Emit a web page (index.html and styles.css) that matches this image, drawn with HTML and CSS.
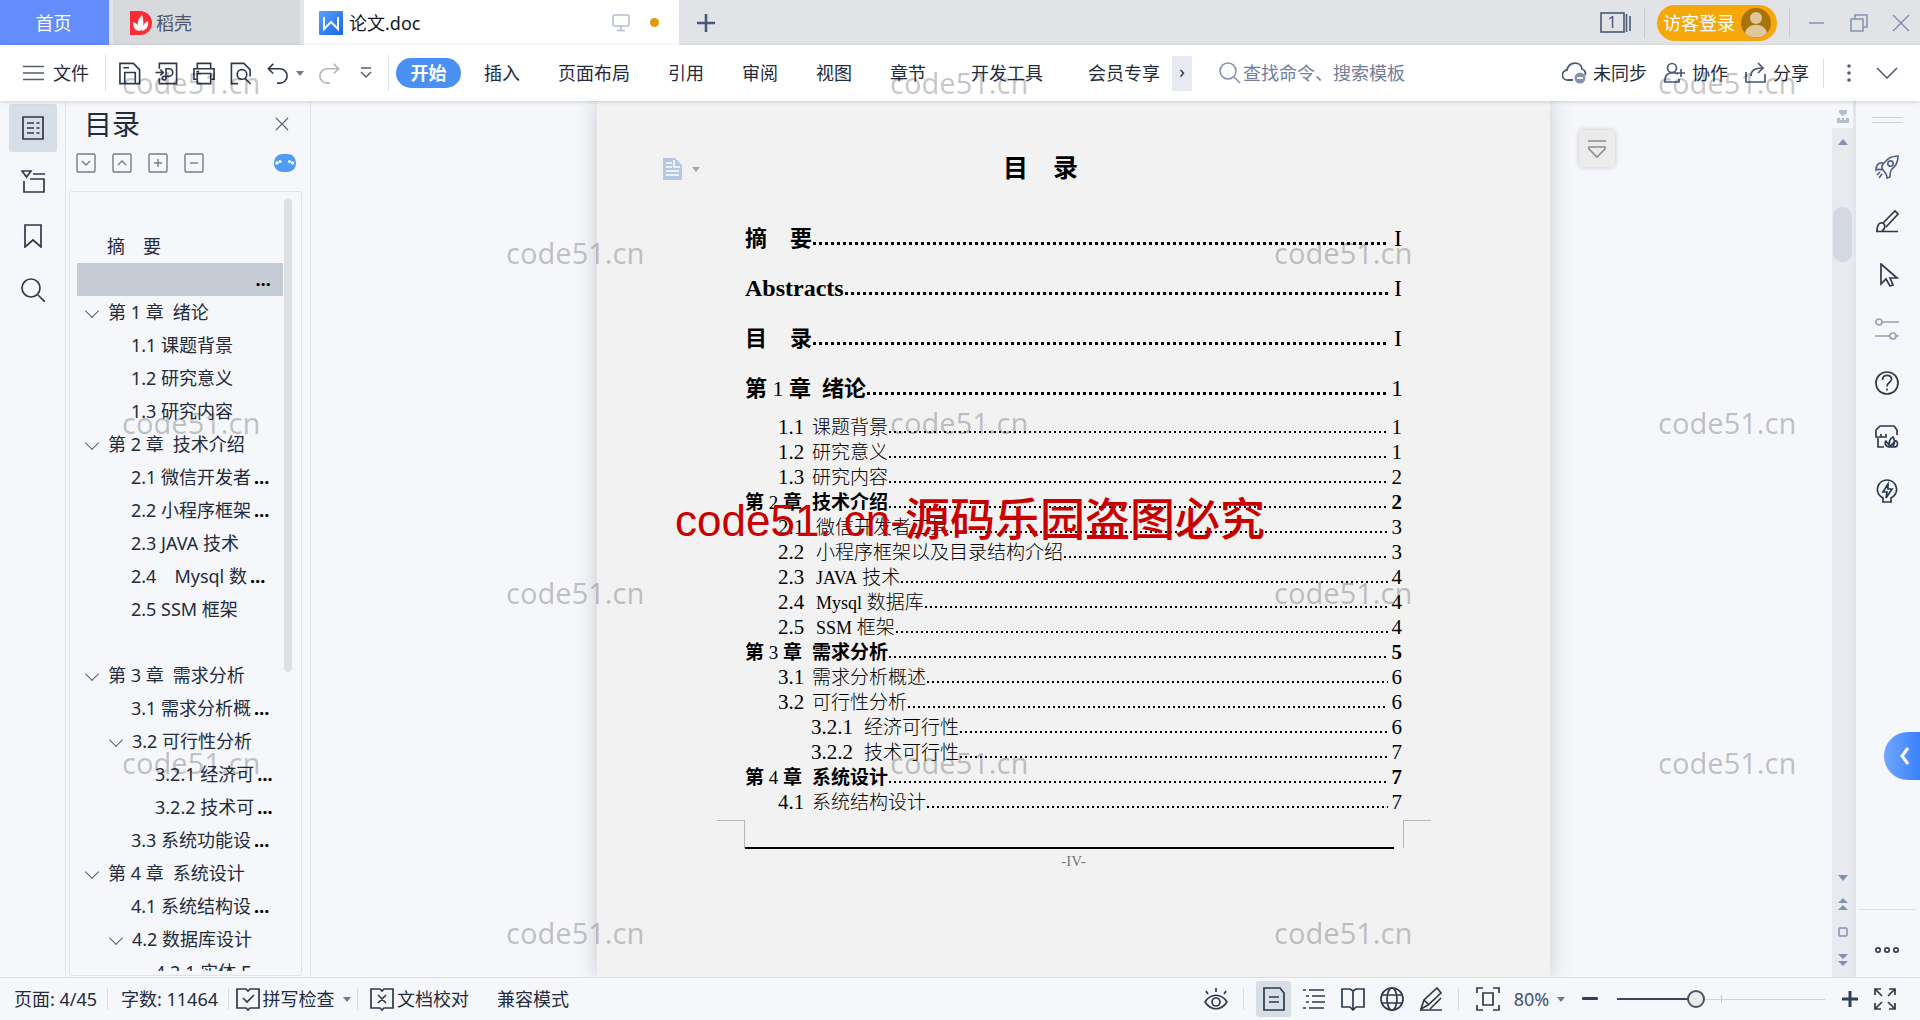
FILE: index.html
```html
<!DOCTYPE html>
<html lang="zh-CN">
<head>
<meta charset="utf-8">
<title>论文.doc</title>
<link rel="stylesheet" href="styles.css">
</head>
<body>
<div class="app">
  <header class="titlebar">
    <button class="tab tab-home">首页</button>
    <button class="tab tab-docer">
      <svg width="24" height="24" viewBox="0 0 24 24"><path d="M1 0h10a12 12 0 0 1 0 24H1z" fill="#fb2c36"/><path d="M12 20C7 15 8 9 13 4c2 6 2 11-1 16zM11 20c-5 0-7-4-7-9 4 1 6 4 7 9zM13 20c0-5 2-8 6-10 1 6-2 9-6 10z" fill="#fff"/></svg>
      稻壳</button>
    <button class="tab tab-doc">
      <svg width="24" height="24" viewBox="0 0 24 24"><defs><linearGradient id="w" x1="0" y1="0" x2="1" y2="1"><stop offset="0" stop-color="#5aa0fa"/><stop offset="1" stop-color="#1668ee"/></linearGradient></defs><rect width="24" height="24" rx="1" fill="url(#w)"/><path d="M5 6v12l7-7 7 7V6" fill="none" stroke="#fff" stroke-width="2"/></svg>
      <span class="tab-name">论文.doc</span>
      <svg width="18" height="18" viewBox="0 0 18 18" fill="none" stroke="#b4bdd2" stroke-width="1.6"><rect x="1" y="1" width="16" height="11" rx="1.5"/><path d="M9 12v4M5 16.5h8"/></svg>
      <span class="dot"></span>
    </button>
    <button class="icon-btn new-tab" aria-label="新建"><svg width="18" height="18" viewBox="0 0 18 18" stroke="#4a5876" stroke-width="2.6"><path d="M9 0v18M0 9h18"/></svg></button>
    <div class="window-tools">
      <button class="icon-btn" aria-label="窗口"><svg width="32" height="24" viewBox="0 0 32 24"><g fill="none" stroke="#4a5876" stroke-width="1.6"><rect x="1" y="2" width="23" height="19"/><path d="M26.500 3v18M30 5v15"/></g><text x="12" y="17" text-anchor="middle" class="count">1</text></svg></button>
      <span class="rule"></span>
      <button class="login">访客登录 <svg width="30" height="30" viewBox="0 0 30 30"><circle cx="15" cy="15" r="15" fill="#a87307"/><circle cx="15" cy="10" r="6" fill="#dfc79c"/><path d="M4 25c2-11 20-11 22 0-5 6-17 6-22 0z" fill="#dfc79c"/></svg></button>
      <span class="rule"></span>
      <button class="icon-btn win" aria-label="最小化"><svg width="18" height="18" viewBox="0 0 18 18" stroke="#8492b0" stroke-width="1.500"><path d="M1 9h15"/></svg></button>
      <button class="icon-btn win" aria-label="还原"><svg width="18" height="18" viewBox="0 0 18 18" fill="none" stroke="#8492b0" stroke-width="1.500"><path d="M5 5V1h12v12h-4"/><rect x="1" y="5" width="12" height="12"/></svg></button>
      <button class="icon-btn win" aria-label="关闭"><svg width="18" height="18" viewBox="0 0 18 18" stroke="#8492b0" stroke-width="1.500"><path d="M1 1l16 16M17 1L1 17"/></svg></button>
    </div>
  </header>

  <nav class="menubar">
    <button class="file-btn"><svg width="22" height="16" viewBox="0 0 22 16" stroke="#555d6e" stroke-width="1.500"><path d="M0 1.500h21M0 8h21M0 14.500h21"/></svg>文件</button>
    <span class="rule tall"></span>
    <div class="quick">
      <button class="icon-btn" aria-label="保存"><svg class="ic" viewBox="0 0 24 24"><path d="M1.500 1.500h14l6.500 6.500v14.500h-20.500zM6.500 22V11h11v11M5 6h6"/></svg></button>
      <button class="icon-btn" aria-label="输出为PDF"><svg class="ic" viewBox="0 0 24 24"><path d="M4 7V1.500h18v21H4V17M0 11h8M5 8l3 3-3 3M11 18V7h3a4 4 0 0 1 0 8h-6a2 2 0 1 0 3 2"/></svg></button>
      <button class="icon-btn" aria-label="打印"><svg class="ic" viewBox="0 0 24 24"><path d="M5 7V1.500h14V7M5 18H1.500V7h21v11H19M5 12h14v10.500H5zM4 10h3"/></svg></button>
      <button class="icon-btn" aria-label="打印预览"><svg class="ic" viewBox="0 0 24 24"><path d="M9 22.500H2v-21h13l6.500 6.500v7M16 17l6 6"/><circle cx="13" cy="13" r="5"/></svg></button>
      <button class="icon-btn undo" aria-label="撤销"><svg class="ic" viewBox="0 0 24 24"><path d="M7 2L2 7l5 5M2 7h12a7 7 0 0 1 0 15h-3"/></svg></button>
      <i class="caret"></i>
      <button class="icon-btn redo" aria-label="恢复"><svg class="ic faint" viewBox="0 0 24 24"><path d="M17 2l5 5-5 5M22 7H10a7 7 0 0 0 0 15h3"/></svg></button>
      <button class="icon-btn" aria-label="更多"><svg width="12" height="14" viewBox="0 0 12 14" fill="none" stroke="#555d6e" stroke-width="1.500"><path d="M1 2h10M1 6l5 5 5-5"/></svg></button>
    </div>
    <span class="rule tall"></span>
    <div class="ribbon">
      <button class="active">开始</button>
      <button>插入</button>
      <button>页面布局</button>
      <button>引用</button>
      <button>审阅</button>
      <button>视图</button>
      <button>章节</button>
      <button class="wide">开发工具</button>
      <button class="wide">会员专享</button>
      <button class="more" aria-label="更多选项卡">›</button>
    </div>
    <label class="search">
      <svg width="22" height="22" viewBox="0 0 22 22" fill="none" stroke="#8793b1" stroke-width="1.600"><circle cx="9" cy="9" r="8"/><path d="M15 15l6 6"/></svg>
      <input type="text" placeholder="查找命令、搜索模板" aria-label="查找命令、搜索模板">
    </label>
    <div class="share">
      <button><svg width="25" height="22" viewBox="0 0 25 22" fill="none" stroke="#4a5876" stroke-width="1.800"><path d="M11 18H6a5 5 0 0 1-1-10C7-1 19-1 20 7c3 1 4 4 3 6"/><circle cx="18" cy="16" r="5.500" fill="#8492b0" stroke="none"/><path d="M15 16h6" stroke="#fff"/></svg>未同步</button>
      <button><svg width="23" height="22" viewBox="0 0 23 22" fill="none" stroke="#4a5876" stroke-width="1.700"><circle cx="9" cy="6" r="4.500"/><path d="M15 12c-6-3-13-1-13 6v2h14v-3M18 7v8M14 11h8"/></svg>协作</button>
      <button><svg width="23" height="22" viewBox="0 0 23 22" fill="none" stroke="#4a5876" stroke-width="1.700"><path d="M2 10v10h19v-8M7 14c0-6 4-8 12-8M14 1l5 5-5 5"/></svg>分享</button>
    </div>
    <span class="rule"></span>
    <button class="icon-btn dots" aria-label="更多"><svg width="6" height="20" viewBox="0 0 6 20" fill="#555d76"><circle cx="3" cy="3" r="1.800"/><circle cx="3" cy="10" r="1.800"/><circle cx="3" cy="17" r="1.800"/></svg></button>
    <button class="icon-btn fold" aria-label="折叠功能区"><svg width="22" height="12" viewBox="0 0 22 12" fill="none" stroke="#4d566b" stroke-width="1.500"><path d="M1 1l10 10L21 1"/></svg></button>
  </nav>

  <main class="workspace">
    <aside class="rail">
      <button class="active" aria-label="目录"><svg class="ic" viewBox="0 0 24 24"><path d="M2 1h20v22H2zM6 7h7M6 12h7M6 17h7M15.500 7h3M15.500 12h3M15.500 17h3"/></svg></button>
      <button aria-label="导航"><svg class="ic" viewBox="0 0 24 24"><path d="M1 1h9L5.500 7zM12 4h12M3 11v11h20V9H9"/></svg></button>
      <button aria-label="书签"><svg class="ic" viewBox="0 0 24 24"><path d="M4 1h16v22l-8-7-8 7z"/></svg></button>
      <button aria-label="查找"><svg class="ic" viewBox="0 0 24 24"><circle cx="10" cy="10" r="9"/><path d="M17 17l7 7"/></svg></button>
    </aside>

    <section class="outline">
      <div class="outline-head"><h2>目录</h2><button class="icon-btn" aria-label="关闭"><svg width="14" height="14" viewBox="0 0 14 14" stroke="#5d6880" stroke-width="1.200"><path d="M1 1l12 12M13 1L1 13"/></svg></button></div>
      <div class="outline-tools">
        <button class="icon-btn" aria-label="展开"><svg class="sq" viewBox="0 0 20 20"><rect x="1" y="1" width="18" height="18" rx="1"/><path d="M6 8l4 4 4-4"/></svg></button>
        <button class="icon-btn" aria-label="收起"><svg class="sq" viewBox="0 0 20 20"><rect x="1" y="1" width="18" height="18" rx="1"/><path d="M6 12l4-4 4 4"/></svg></button>
        <button class="icon-btn" aria-label="增加"><svg class="sq" viewBox="0 0 20 20"><rect x="1" y="1" width="18" height="18" rx="1"/><path d="M6 10h8M10 6v8"/></svg></button>
        <button class="icon-btn" aria-label="减少"><svg class="sq" viewBox="0 0 20 20"><rect x="1" y="1" width="18" height="18" rx="1"/><path d="M6 10h8"/></svg></button>
        <button class="icon-btn assistant" aria-label="智能识别"><svg width="22" height="18" viewBox="0 0 22 18"><rect width="22" height="18" rx="8.500" fill="#4f9bf5"/><g fill="#fff"><circle cx="3" cy="9" r="1.700"/><circle cx="6" cy="7.500" r="1.500"/><circle cx="15.500" cy="7.500" r="1.500"/><circle cx="18.500" cy="9" r="1.700"/></g></svg></button>
      </div>
      <div class="tree">
        <ul>
          <li><a href="#">摘&emsp;要</a></li>
          <li class="selected"><a href="#">…</a></li>
          <li class="open"><a href="#">第 1 章&ensp;绪论</a></li>
          <li class="l2"><a href="#">1.1 课题背景</a></li>
          <li class="l2"><a href="#">1.2 研究意义</a></li>
          <li class="l2"><a href="#">1.3 研究内容</a></li>
          <li class="open"><a href="#">第 2 章&ensp;技术介绍</a></li>
          <li class="l2"><a href="#">2.1 微信开发者<b>…</b></a></li>
          <li class="l2"><a href="#">2.2 小程序框架<b>…</b></a></li>
          <li class="l2"><a href="#">2.3 JAVA 技术</a></li>
          <li class="l2"><a href="#">2.4&emsp;Mysql 数<b>…</b></a></li>
          <li class="l2"><a href="#">2.5 SSM 框架</a></li>
          <li></li>
          <li class="open"><a href="#">第 3 章&ensp;需求分析</a></li>
          <li class="l2"><a href="#">3.1 需求分析概<b>…</b></a></li>
          <li class="l2 open"><a href="#">3.2 可行性分析</a></li>
          <li class="l3"><a href="#">3.2.1 经济可<b>…</b></a></li>
          <li class="l3"><a href="#">3.2.2 技术可<b>…</b></a></li>
          <li class="l2"><a href="#">3.3 系统功能设<b>…</b></a></li>
          <li class="open"><a href="#">第 4 章&ensp;系统设计</a></li>
          <li class="l2"><a href="#">4.1 系统结构设<b>…</b></a></li>
          <li class="l2 open"><a href="#">4.2 数据库设计</a></li>
          <li class="l3"><a href="#">4.2.1 实体 E</a></li>
        </ul>
        <div class="tree-bar"></div>
      </div>
    </section>

    <section class="canvas">
      <article class="page">
        <button class="icon-btn toc-handle" aria-label="更新目录"><svg width="19" height="22" viewBox="0 0 19 22"><path d="M0 0h12l7 7v15H0z" fill="#b4c7e4"/><path d="M3 5h6M3 9h6M3 13h13M3 17h13M11 2v7h6" stroke="#fff" stroke-width="1.500" fill="none"/></svg><i class="caret"></i></button>
        <h1>目&emsp;录</h1>
        <ol class="toc">
          <li class="major"><span>摘<i class="gap"></i>要</span><i class="lead"></i><span class="pg">I</span></li>
          <li class="major latin"><span>Abstracts</span><i class="lead"></i><span class="pg">I</span></li>
          <li class="major"><span>目<i class="gap"></i>录</span><i class="lead"></i><span class="pg">I</span></li>
          <li class="major"><span>第 <em>1</em> 章&ensp;绪论</span><i class="lead"></i><span class="pg">1</span></li>
          <li class="sub"><i class="no">1.1</i><span>课题背景</span><i class="lead"></i><span class="pg">1</span></li>
          <li class="sub"><i class="no">1.2</i><span>研究意义</span><i class="lead"></i><span class="pg">1</span></li>
          <li class="sub"><i class="no">1.3</i><span>研究内容</span><i class="lead"></i><span class="pg">2</span></li>
          <li class="chap"><i class="no">第 <em>2</em> 章</i><span>技术介绍</span><i class="lead"></i><span class="pg">2</span></li>
          <li class="sub two"><i class="no">2.1</i><span>微信开发者工具</span><i class="lead"></i><span class="pg">3</span></li>
          <li class="sub two"><i class="no">2.2</i><span>小程序框架以及目录结构介绍</span><i class="lead"></i><span class="pg">3</span></li>
          <li class="sub two"><i class="no">2.3</i><span><em>JAVA</em> 技术</span><i class="lead"></i><span class="pg">4</span></li>
          <li class="sub two"><i class="no">2.4</i><span><em>Mysql</em> 数据库</span><i class="lead"></i><span class="pg">4</span></li>
          <li class="sub two"><i class="no">2.5</i><span><em>SSM</em> 框架</span><i class="lead"></i><span class="pg">4</span></li>
          <li class="chap"><i class="no">第 <em>3</em> 章</i><span>需求分析</span><i class="lead"></i><span class="pg">5</span></li>
          <li class="sub"><i class="no">3.1</i><span>需求分析概述</span><i class="lead"></i><span class="pg">6</span></li>
          <li class="sub"><i class="no">3.2</i><span>可行性分析</span><i class="lead"></i><span class="pg">6</span></li>
          <li class="subsub"><i class="no">3.2.1</i><span>经济可行性</span><i class="lead"></i><span class="pg">6</span></li>
          <li class="subsub"><i class="no">3.2.2</i><span>技术可行性</span><i class="lead"></i><span class="pg">7</span></li>
          <li class="chap"><i class="no">第 <em>4</em> 章</i><span>系统设计</span><i class="lead"></i><span class="pg">7</span></li>
          <li class="sub"><i class="no">4.1</i><span>系统结构设计</span><i class="lead"></i><span class="pg">7</span></li>
        </ol>
        <footer class="page-foot"><i class="corner left"></i><div class="line"></div><i class="corner right"></i></footer>
        <p class="folio">-IV-</p>
      </article>
      <button class="float-btn" aria-label="选项"><svg width="20" height="20" viewBox="0 0 20 20" fill="none" stroke="#8b8d90" stroke-width="1.600"><path d="M1 2h18M2 8h16v2l-8 8-8-8z"/></svg></button>
    </section>

    <div class="vscroll">
      <svg width="14" height="14" viewBox="0 0 14 14" fill="#b4bdd2"><path d="M3 0h8v3L7 6 3 3zM1 8h3v2h2V8h2v2h2V8h3v5H1z"/></svg>
      <div class="track">
        <svg width="10" height="6" viewBox="0 0 10 6"><path d="M0 6l5-6 5 6z"/></svg>
        <div class="thumb"></div>
        <div class="jumps">
          <svg width="10" height="6" viewBox="0 0 10 6"><path d="M0 0h10L5 6z"/></svg>
          <svg width="10" height="12" viewBox="0 0 10 12"><path d="M0 5l5-5 5 5zM0 12l5-5 5 5z"/></svg>
          <svg width="10" height="10" viewBox="0 0 10 10"><rect x="1" y="1" width="8" height="8" rx="1" fill="none" stroke="#8492b0" stroke-width="1.500"/></svg>
          <svg width="10" height="12" viewBox="0 0 10 12"><path d="M0 0h10L5 5zM0 7h10l-5 5z"/></svg>
        </div>
      </div>
    </div>

    <aside class="side">
      <i class="grip"></i>
      <button aria-label="推荐"><svg class="ic blue" viewBox="0 0 24 24"><path d="M8 15C5 11 8 9 10 7 13 3 18 1 23 1c0 6-2 10-6 13-2 2-2 4-2 8l-3 1c0-4-2-6-4-8zM8 8c-5-1-7 3-7 7 2-1 4-1 7 0M2 20l3-3M4 23l3-4"/><circle cx="15.500" cy="8.500" r="2.700"/></svg></button>
      <button aria-label="样式"><svg class="ic" viewBox="0 0 24 24"><path d="M1 22.500h22M2 22c0-6 2-9 6-8 3 2 2 6-1 8M8 14L20 2l3 3-12 13"/></svg></button>
      <button aria-label="选择"><svg class="ic" viewBox="0 0 24 24"><path d="M6 1v20l5-5 4 7 3-1-3-7h7z"/></svg></button>
      <button aria-label="设置"><svg class="ic pale" viewBox="0 0 24 24"><circle cx="4" cy="5" r="3"/><circle cx="18" cy="19" r="3"/><path d="M7 5h17M0 19h15M21 19h3"/></svg></button>
      <button aria-label="帮助"><svg class="ic" viewBox="0 0 24 24"><circle cx="12" cy="12" r="11"/><path d="M7.500 9c0-6 9-6 9-1 0 4-4.500 3-4.500 7.500M12 17.500v2"/></svg></button>
      <button aria-label="资源"><svg class="ic" viewBox="0 0 24 24"><path d="M9 22H3V13M22 10V5l-3-4H5L1 5v7h5V9v3h5V9M14 22c-5-1-4-6-3-6l3 4c0-5 2-7 4-8 2 3 2 6 0 10h-4c2-1 6-6 6-6 3-1 4 6-1 6z"/></svg></button>
      <button aria-label="灵感"><svg class="ic" viewBox="0 0 24 24"><path d="M8 23v-4C-2 13 3 1 12 1s14 12 4 18v4zM13 5l-5 8h4l-1 6 6-9h-4z"/></svg></button>
      <button class="side-more" aria-label="更多"><svg width="24" height="8" viewBox="0 0 24 8" fill="none" stroke="#333d52" stroke-width="1.700"><circle cx="3" cy="4" r="2.200"/><circle cx="12" cy="4" r="2.200"/><circle cx="21" cy="4" r="2.200"/></svg></button>
      <button class="pull" aria-label="展开侧栏"><svg width="10" height="18" viewBox="0 0 10 18" fill="none" stroke="#fff" stroke-width="3"><path d="M8 1L2 9l6 8"/></svg></button>
    </aside>
  </main>

  <footer class="status">
    <span class="stat page-no">页面: 4/45</span>
    <span class="rule"></span>
    <span class="stat words">字数: 11464</span>
    <span class="rule"></span>
    <button class="spell"><svg class="ic" viewBox="0 0 24 24"><path d="M1 2h9l2 2 2-2h9v19h-9l-2 2-2-2H1zM7 11l4 4 7-7"/></svg>拼写检查<i class="caret"></i></button>
    <span class="rule"></span>
    <button class="proof"><svg class="ic" viewBox="0 0 24 24"><path d="M1 2h9l2 2 2-2h9v19h-9l-2 2-2-2H1zM8 8l8 8M16 8l-8 8"/></svg>文档校对</button>
    <span class="stat compat">兼容模式</span>
    <div class="views">
      <button aria-label="护眼模式"><svg class="ic" viewBox="0 0 24 24"><path d="M1 15c6-9 16-9 22 0-6 9-16 9-22 0zM12 1v4M2 4l2 3M22 4l-2 3"/><circle cx="12" cy="15" r="4"/></svg></button>
      <span class="rule"></span>
      <button class="active" aria-label="页面视图"><svg class="ic" viewBox="0 0 24 24"><path d="M2 1h16l4 5v17H2zM7 10h10M7 15h10"/></svg></button>
      <button aria-label="大纲"><svg class="ic" viewBox="0 0 24 24"><path d="M1 3h3M7 3h15M4 9h3M10 9h13M4 15h3M10 15h13M1 21h3M7 21h15"/></svg></button>
      <button aria-label="阅读版式"><svg class="ic" viewBox="0 0 24 24"><path d="M1 2h8l3 2 3-2h8v18h-8l-3 3-3-3H1zM12 4v18"/></svg></button>
      <button aria-label="Web版式"><svg class="ic" viewBox="0 0 24 24"><circle cx="12" cy="12" r="11"/><ellipse cx="12" cy="12" rx="5" ry="11"/><path d="M2 8h20M2 16h20"/></svg></button>
      <button aria-label="写作模式"><svg class="ic" viewBox="0 0 24 24"><path d="M1 23h22M2 22l3-9L18 1l4 5L9 18zM5 13l5 5M22 11L11 22"/></svg></button>
      <span class="rule"></span>
      <button aria-label="最佳显示比例"><svg class="ic" viewBox="0 0 24 24"><path d="M1 6V1h6M17 1h6v5M23 18v5h-6M7 23H1v-5M7 6h10v12H7z"/></svg></button>
      <button class="zoom">80%<i class="caret"></i></button>
      <button class="minus" aria-label="缩小"><svg width="16" height="4" viewBox="0 0 16 4" fill="#333f58"><rect width="16" height="3" rx="1"/></svg></button>
      <input type="range" class="slider" min="0" max="100" value="37" aria-label="缩放">
      <button class="plus" aria-label="放大"><svg width="16" height="16" viewBox="0 0 16 16" stroke="#333f58" stroke-width="3"><path d="M8 0v16M0 8h16"/></svg></button>
      <button aria-label="全屏"><svg class="ic" viewBox="0 0 24 24"><path d="M2 8V2h6M2 2l7 7M16 2h6v6M22 2l-7 7M2 16v6h6M2 22l7-7M22 16v6h-6M22 22l-7-7"/></svg></button>
    </div>
  </footer>

  <div class="marks" aria-hidden="true">
    <div><span>code51.cn</span><span>code51.cn</span><span>code51.cn</span></div>
    <div class="shift"><span>code51.cn</span><span>code51.cn</span></div>
    <div><span>code51.cn</span><span>code51.cn</span><span>code51.cn</span></div>
    <div class="shift"><span>code51.cn</span><span>code51.cn</span></div>
    <div><span>code51.cn</span><span>code51.cn</span><span>code51.cn</span></div>
    <div class="shift"><span>code51.cn</span><span>code51.cn</span></div>
  </div>
  <div class="notice">code51. cn-<b>源码乐园盗图必究</b></div>
</div>
</body>
</html>
```
FILE: styles.css
```css
* { box-sizing: border-box; }
body { margin: 0; font: 18px/24px "Noto Sans", "Noto Sans CJK SC", sans-serif; color: #232b3d; }
button { border: 0; padding: 0; background: none; font: inherit; color: inherit; display: flex; align-items: center; justify-content: center; white-space: nowrap; flex: none; }
svg { flex: none; display: block; }
a { color: inherit; text-decoration: none; }
i, em { font-style: normal; }
.app { position: relative; height: 100vh; display: flex; flex-direction: column; overflow: hidden; background: #f5f7fa; font-family: "Noto Sans", "Noto Sans CJK SC", sans-serif; }
.ic { width: 24px; height: 24px; fill: none; stroke: #2f394e; stroke-width: 1.7; }
.ic.faint { stroke: #b3b6bb; }
.ic.blue { stroke: #566386; }
.ic.pale { stroke: #97a1b5; }
.rule { flex: none; width: 1px; height: 30px; background: #c9ccd3; }
.caret { width: 0; height: 0; border: 4px solid transparent; border-top: 5px solid #6c7a94; border-bottom: 0; }

.titlebar { flex: none; height: 45px; display: flex; align-items: center; gap: 4px; background: #e2e3e7; }
.tab { height: 45px; }
.tab-home { width: 109px; padding-right: 2px; background: #638dfd; color: #fff; }
.tab-docer { width: 187px; padding-left: 16px; gap: 3px; justify-content: flex-start; background: #d8d9dd; color: #4c5569; }
.tab-doc { width: 375px; padding: 0 20px 0 15px; gap: 6px; background: #fff; color: #111722; }
.tab-name { flex: 1; text-align: left; }
.dot { width: 9px; height: 9px; margin-left: 14px; border-radius: 50%; background: #e49b05; }
.new-tab { width: 46px; }
.window-tools { margin-left: auto; padding-right: 4px; display: flex; align-items: center; gap: 12px; }
.count { font-size: 16px; fill: #4a5876; }
.login { width: 120px; height: 36px; gap: 6px; border-radius: 18px; background: #f6a80b; color: #fff; }
.win { width: 30px; }

.menubar { position: relative; z-index: 1; flex: none; height: 56px; display: flex; align-items: center; background: #fff; box-shadow: 0 1px 4px rgba(0, 0, 0, .16); }
.menubar .rule { background: #dcdfe4; }
.file-btn { margin: 0 16px 0 23px; gap: 8px; }
.menubar .tall { height: 36px; }
.quick { display: flex; align-items: center; width: 282px; padding-left: 12px; gap: 13px; }
.quick .ic { height: 23px; }
.quick .caret { margin-left: -7px; }
.quick .redo + button { margin-left: 6px; }
.ribbon { display: flex; align-items: center; margin-left: 7px; }
.ribbon button { padding: 0 19px; height: 30px; }
.ribbon .active { width: 65px; margin-right: 4px; padding: 0; border-radius: 15px; background: #4a90f3; color: #fff; font-weight: 700; }
.ribbon .wide { padding-left: 26px; }
.ribbon .wide + .more { width: 20px; height: 35px; margin-left: -7px; padding: 0 0 4px; background: #e7eaf0; }
.search { display: flex; align-items: center; gap: 2px; margin-left: 27px; flex: 1; }
.search input { flex: 1; min-width: 0; border: 0; padding: 0; outline: 0; font: inherit; background: none; }
.search input::placeholder { color: #717d9b; opacity: 1; }
.share { display: flex; gap: 16px; margin-right: 14px; }
.share button { gap: 6px; }
.dots { width: 50px; }
.fold { width: 26px; margin: 0 20px 0 0; }

.workspace { flex: 1; min-height: 0; display: flex; }
.rail { flex: none; width: 66px; padding: 3px 9px; display: flex; flex-direction: column; gap: 6px; border-right: 1px solid #e0e3e8; }
.rail button { width: 48px; height: 48px; border-radius: 3px; }
.rail .active { background: #d8dee6; }
.outline { flex: none; width: 245px; padding: 0 8px 1px 3px; display: flex; flex-direction: column; border-right: 1px solid #e0e3e8; }
.outline-head { display: flex; justify-content: space-between; align-items: center; height: 46px; padding: 0 13px 0 15px; }
h2 { margin: 0; font-size: 28px; line-height: 36px; font-weight: 400; }
.outline-tools { display: flex; align-items: center; gap: 16px; height: 32px; padding: 0 6px 0 7px; }
.sq { width: 20px; height: 20px; fill: none; stroke: #777c85; stroke-width: 1.4; }
.assistant { margin-left: auto; }
.tree { flex: 1; min-height: 0; display: flex; margin-top: 12px; padding: 7px 9px 4px 7px; border: 1px solid #dfe2e8; border-radius: 3px; overflow: hidden; }
.tree ul { flex: 1; margin: 0; padding: 31px 0 0; list-style: none; overflow: hidden; }
.tree li { height: 33px; padding-left: 30px; line-height: 33px; display: flex; align-items: center; position: relative; white-space: nowrap; }
.tree .l2 { padding-left: 54px; }
.tree .l3 { padding-left: 78px; }
.tree b { margin-left: 3px; font-weight: 700; color: #000; }
.tree .open::before { content: ""; flex: none; width: 9px; height: 9px; margin: 0 11px 4px -20px; border: solid #566074; border-width: 0 1px 1px 0; transform: rotate(45deg); }
.tree .selected { justify-content: flex-end; padding-right: 12px; background: #c5ccd4; color: #000; font-weight: 700; }
.tree-bar { flex: none; width: 8px; height: 473px; margin-left: 1px; border-radius: 4px; background: #dce0e3; }

.canvas { position: relative; flex: 1; min-width: 0; padding: 0 282px 0 286px; overflow: hidden; }
.page { position: relative; height: 100%; padding: 50px 148px 0; background: #f2f2f2; box-shadow: 0 0 20px rgba(60, 70, 80, .25); color: #000; font-family: "Liberation Serif", "Noto Sans CJK SC", serif; }
.toc-handle { position: absolute; left: 66px; top: 57px; gap: 10px; }
.toc-handle .caret { border-top-color: #a4a8ae; }
h1 { margin: 0 0 26px; padding-right: 66px; font-size: 25px; line-height: 36px; text-align: center; font-weight: 700; }
.toc { margin: 0; padding: 0; list-style: none; font-size: 19px; line-height: 25px; font-weight: 300; }
.toc li { display: flex; align-items: center; height: 25px; white-space: nowrap; }
.toc .major { height: 50px; font-size: 22px; font-weight: 700; }
.toc .latin { font-size: 24px; }
.toc .major + .sub { margin-top: 2px; }
.toc .sub { padding-left: 33px; }
.toc .subsub { padding-left: 66px; }
.toc .chap { font-weight: 700; }
.toc em { font-size: 18px; }
.toc .chap em { font-size: 19px; font-weight: 400; }
.toc .major em { font-size: 22px; font-weight: 400; }
.no { width: 34px; }
.sub .no, .subsub .no { font-size: 21px; }
.two .no { width: 38px; }
.chap .no { width: 67px; }
.subsub .no { width: 53px; }
.pg { width: 11px; text-align: right; font-size: 21px; }
.major .pg { font-size: 24px; font-weight: 400; }
.gap { display: inline-block; width: 23px; }
.lead { flex: 1; height: 2px; margin: 8px 3px 0 1px; background: repeating-linear-gradient(90deg, #000 0 2px, transparent 2px 5px); }
.major .lead { height: 3px; margin-top: 10px; background: repeating-linear-gradient(90deg, #000 0 3px, transparent 3px 6px); }
.page-foot { display: flex; margin: 5px -29px 0 -28px; }
.corner { width: 28px; height: 28px; border-top: 1px solid #b5b5b5; }
.corner.left { border-right: 1px solid #b5b5b5; }
.corner.right { border-left: 1px solid #b5b5b5; }
.page-foot .line { flex: 1; margin-right: 9px; border-bottom: 2px solid #000; height: 29px; }
.folio { margin: 2px 0; font-size: 15px; line-height: 20px; text-align: center; color: #777; }
.float-btn { position: absolute; top: 29px; right: 217px; width: 36px; height: 37px; border-radius: 3px; background: #ebebeb; box-shadow: 0 0 5px rgba(0, 0, 0, .2); }

.vscroll { flex: none; width: 24px; display: flex; flex-direction: column; align-items: center; padding-top: 9px; border-right: 3px solid #e3e5ea; }
.track { flex: 1; align-self: stretch; display: flex; flex-direction: column; align-items: center; margin-top: 4px; padding: 11px 0; background: #e8eaf0; }
.track svg { fill: #8492b0; }
.thumb { width: 19px; height: 55px; margin-top: 62px; border-radius: 9px; background: #d4d8e0; }
.jumps { margin-top: auto; display: flex; flex-direction: column; align-items: center; gap: 17px; }

.side { position: relative; flex: none; width: 64px; display: flex; flex-direction: column; align-items: center; padding: 15px 2px 0 0; }
.grip { width: 30px; height: 6px; margin: 1px 0 17px; border: solid #ccced2; border-width: 1px 0; }
.side button { width: 62px; height: 54px; }
.side .side-more { height: 68px; width: 58px; margin-top: auto; padding-top: 12px; border-top: 1px solid #dfe2e8; }
.side .pull { position: absolute; right: 0; bottom: 197px; width: 36px; height: 48px; padding-left: 6px; border-radius: 24px 0 0 24px; background: linear-gradient(90deg, #71a5ff, #3a82fb); }

.status { flex: none; height: 43px; display: flex; align-items: center; border-top: 1px solid #dcdfe5; background: #f5f7fa; }
.status .rule { height: 22px; background: #d9dce2; }
.page-no { width: 107px; padding-left: 14px; }
.words { width: 120px; padding-left: 13px; white-space: nowrap; }
.spell { width: 128px; gap: 3px; }
.spell .caret { margin-left: 5px; }
.proof { margin-left: 12px; gap: 3px; }
.compat { margin-left: 28px; }
.views { margin-left: auto; padding-right: 16px; display: flex; align-items: center; }
.views button { width: 39px; height: 36px; }
.views .rule { margin: 0 9px 0 8px; }
.views .active { width: 35px; margin: 0 3px; border-radius: 3px; background: #d8dee6; }
.views .zoom { width: 65px; gap: 8px; color: #45506a; }
.views .minus { width: 36px; }
.slider { appearance: none; width: 208px; height: 20px; margin: 0 9px; background: linear-gradient(#3b465a, #3b465a) left / 38% 2px no-repeat, linear-gradient(#c4c8ce, #c4c8ce) 50% 50% / 1px 8px no-repeat, linear-gradient(#cfd2d7, #cfd2d7) center / 100% 1px no-repeat; }
.slider::-webkit-slider-thumb { appearance: none; width: 18px; height: 18px; border: 2px solid #4e545e; border-radius: 50%; background: #ececec; }
.views .plus { width: 31px; }

.marks { position: absolute; inset: 0; z-index: 2; overflow: hidden; pointer-events: none; padding-top: 63px; font-size: 29px; line-height: 40px; color: rgba(0, 0, 0, .22); }
.marks div { display: flex; height: 170px; padding-left: 122px; }
.marks .shift { padding-left: 506px; }
.marks span { flex: none; width: 768px; }
.notice { position: absolute; left: 675px; top: 491px; z-index: 3; pointer-events: none; font: 44px/60px "Liberation Sans", "Noto Sans CJK SC", sans-serif; color: #c80000; white-space: nowrap; }
.notice b { font-size: 45px; font-weight: 500; }
```
